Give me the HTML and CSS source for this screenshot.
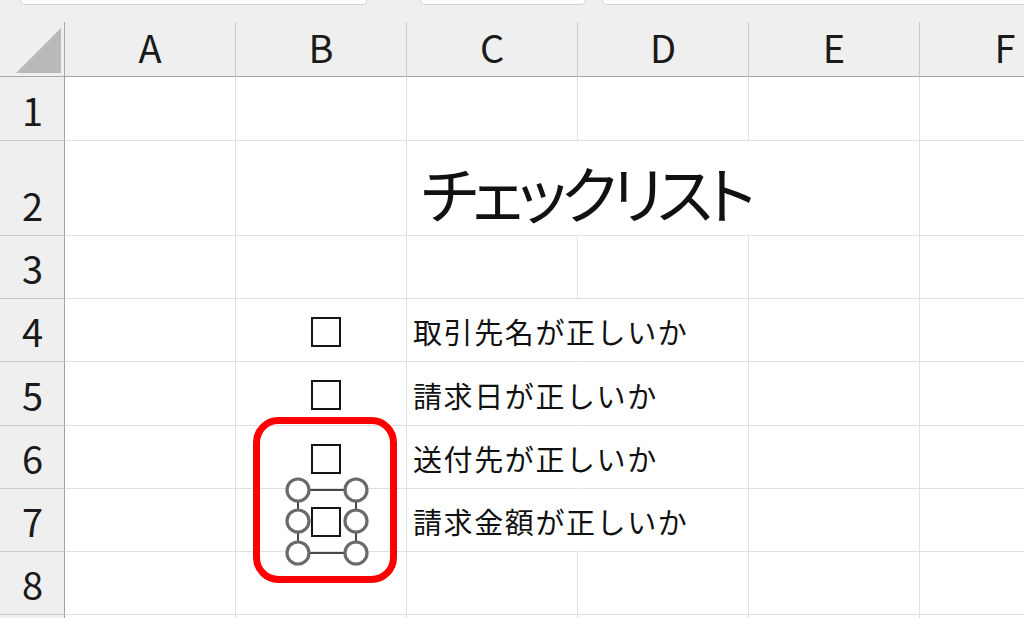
FILE: index.html
```html
<!DOCTYPE html>
<html lang="ja">
<head>
<meta charset="utf-8">
<title>チェックリスト</title>
<link rel="stylesheet" href="styles.css">
</head>
<body>
<div class="page">
  <div class="topbar">
    <div class="fld f1"></div>
    <div class="fld f2"></div>
    <div class="fld f3"></div>
  </div>
  <div class="sheet">
    <div class="corner"><span class="tri"></span></div>
    <div class="colh">A</div>
    <div class="colh">B</div>
    <div class="colh">C</div>
    <div class="colh">D</div>
    <div class="colh">E</div>
    <div class="colh">F</div>

    <div class="rowh">1</div>
    <div class="cell"></div><div class="cell"></div><div class="cell"></div><div class="cell"></div><div class="cell"></div><div class="cell"></div>

    <div class="rowh">2</div>
    <div class="cell"></div><div class="cell"></div>
    <div class="cell nr"><span class="title">チェックリスト</span></div>
    <div class="cell nr"></div><div class="cell"></div><div class="cell"></div>

    <div class="rowh">3</div>
    <div class="cell"></div><div class="cell"></div><div class="cell"></div><div class="cell"></div><div class="cell"></div><div class="cell"></div>

    <div class="rowh">4</div>
    <div class="cell"></div>
    <div class="cell chk"><span class="box"></span></div>
    <div class="cell nr"><span class="txt">取引先名が正しいか</span></div>
    <div class="cell"></div><div class="cell"></div><div class="cell"></div>

    <div class="rowh">5</div>
    <div class="cell"></div>
    <div class="cell chk"><span class="box"></span></div>
    <div class="cell nr"><span class="txt">請求日が正しいか</span></div>
    <div class="cell"></div><div class="cell"></div><div class="cell"></div>

    <div class="rowh">6</div>
    <div class="cell"></div>
    <div class="cell chk"><span class="box"></span></div>
    <div class="cell nr"><span class="txt">送付先が正しいか</span></div>
    <div class="cell"></div><div class="cell"></div><div class="cell"></div>

    <div class="rowh">7</div>
    <div class="cell"></div>
    <div class="cell chk"><span class="box"></span></div>
    <div class="cell nr"><span class="txt">請求金額が正しいか</span></div>
    <div class="cell"></div><div class="cell"></div><div class="cell"></div>

    <div class="rowh">8</div>
    <div class="cell"></div><div class="cell"></div><div class="cell"></div><div class="cell"></div><div class="cell"></div><div class="cell"></div>

    <div class="rowh"></div>
    <div class="cell"></div><div class="cell"></div><div class="cell"></div><div class="cell"></div><div class="cell"></div><div class="cell"></div>
  </div>

  <svg class="marker" width="150" height="172" viewBox="0 0 150 172" aria-hidden="true">
    <rect x="6.5" y="6.5" width="137" height="159" rx="22" ry="22" fill="none" stroke="#ff0000" stroke-width="7"/>
    <rect x="48" y="76" width="58" height="63" fill="none" stroke="#333333" stroke-width="1.8"/>
    <g fill="#ffffff" stroke="#6a6a6a" stroke-width="3.2">
      <circle cx="48" cy="76" r="11"/>
      <circle cx="106" cy="76" r="11"/>
      <circle cx="48" cy="107" r="11"/>
      <circle cx="106" cy="107" r="11"/>
      <circle cx="48" cy="139" r="11"/>
      <circle cx="106" cy="139" r="11"/>
    </g>
  </svg>
</div>
</body>
</html>
```

FILE: styles.css
```css
html, body {
  margin: 0;
  padding: 0;
  width: 1024px;
  height: 618px;
  overflow: hidden;
  background: #efefef;
}

body {
  font-family: "Noto Sans CJK JP", "Noto Sans", sans-serif;
  color: #111;
}

.page {
  position: relative;
  width: 1024px;
  height: 618px;
  overflow: hidden;
}

.topbar {
  position: relative;
  z-index: 1;
  height: 22px;
  background: #efefef;
  display: flex;
  align-items: flex-start;
}

.fld {
  box-sizing: border-box;
  height: 5px;
  background: #fff;
  border: 1px solid #d3d3d3;
  border-top: 0;
  border-radius: 0 0 7px 7px;
}

.f1 { margin-left: 20px; width: 347px; }
.f2 { margin-left: 53px; width: 166px; }
.f3 { margin-left: 16px; flex: 1; margin-right: -20px; }

.sheet {
  display: grid;
  grid-template-columns: 65px repeat(6, 171px);
  grid-template-rows: 77px 64px 95px 63px 63px 64px 63px 63px 63px 63px;
  margin-top: -22px;
  background: #fff;
  width: 1024px;
  overflow: hidden;
}

.sheet > div {
  box-sizing: border-box;
  min-width: 0;
}

.corner {
  background: #efefef;
  border-right: 1px solid #a8a8a8;
  border-bottom: 1px solid #a8a8a8;
  display: flex;
  justify-content: flex-end;
  align-items: flex-end;
  padding: 0 3px 3px 0;
}

.tri {
  width: 45px;
  height: 45px;
  background: #b9b9b9;
  clip-path: polygon(100% 0, 100% 100%, 0 100%);
}

.colh {
  background: #efefef;
  border-right: 1px solid #cbcbcb;
  border-bottom: 1px solid #a3a3a3;
  display: flex;
  justify-content: center;
  align-items: flex-end;
  font-size: 38px;
  line-height: 1;
  padding-bottom: 10px;
  color: #1a1a1a;
}

.rowh {
  background: #efefef;
  border-right: 1px solid #a3a3a3;
  border-bottom: 1px solid #c9c9c9;
  display: flex;
  justify-content: center;
  align-items: flex-end;
  font-size: 38px;
  line-height: 1;
  padding-bottom: 11px;
  padding-left: 1px;
  color: #1a1a1a;
}

.cell {
  border-right: 1px solid #e0e0e0;
  border-bottom: 1px solid #e0e0e0;
  display: flex;
  align-items: flex-end;
}

.cell.nr {
  border-right-color: transparent;
}

.title {
  font-size: 62px;
  line-height: 1;
  letter-spacing: -5.3px;
  font-feature-settings: "palt";
  white-space: nowrap;
  padding-left: 14px;
  padding-bottom: 12px;
  color: #111;
}

.txt {
  font-size: 29px;
  line-height: 1;
  letter-spacing: 1.6px;
  white-space: nowrap;
  padding-left: 6px;
  padding-bottom: 15px;
}

.cell.chk {
  align-items: flex-start;
  padding-left: 75px;
  padding-top: 18px;
}

.box {
  box-sizing: border-box;
  width: 30px;
  height: 30px;
  border: 2px solid #151515;
}

.marker {
  position: absolute;
  left: 250px;
  top: 414px;
}
```
